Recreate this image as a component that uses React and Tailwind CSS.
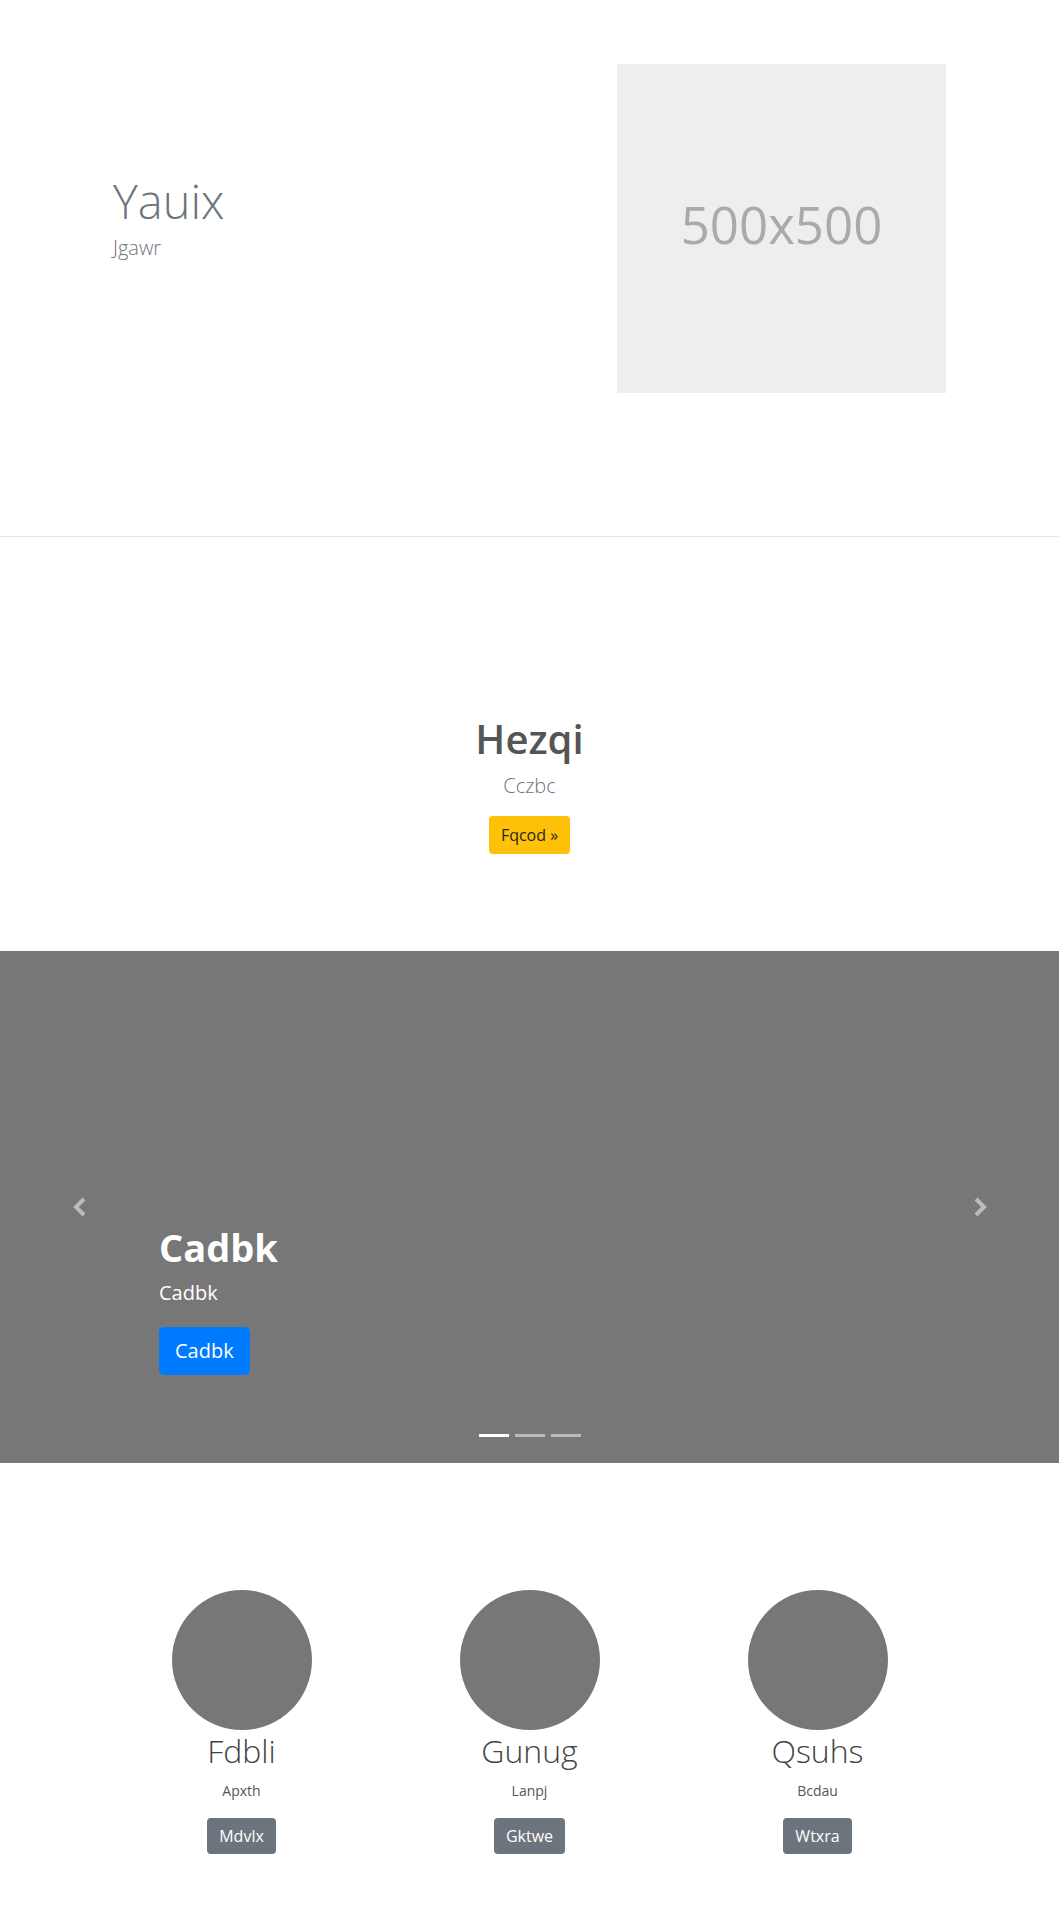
import React from 'react';

const team = [
  { name: 'Fdbli', role: 'Apxth', btn: 'Mdvlx' },
  { name: 'Gunug', role: 'Lanpj', btn: 'Gktwe' },
  { name: 'Qsuhs', role: 'Bcdau', btn: 'Wtxra' },
];

const Chevron = ({ dir }) => (
  <svg width="14" height="20" viewBox="0 0 14 20" fill="none">
    <polyline
      points={dir === 'left' ? '11,2 3,10 11,18' : '3,2 11,10 3,18'}
      stroke="#bbbbbb"
      strokeWidth="4"
      strokeLinejoin="miter"
    />
  </svg>
);

const App = () => {
  return (
    <div className="w-[1059px] bg-white font-['Open_Sans',sans-serif] text-[#212529]">
      {/* hero */}
      <section className="flex justify-between px-[113px] pb-[143px] border-b border-[#e6e6e6]">
        <div className="pt-[173px]">
          <h1 className="text-[47px] leading-[57px] font-light text-[#6c757d] mb-[3px]">Yauix</h1>
          <p className="text-[20px] leading-[30px] font-light text-[#6c757d]">Jgawr</p>
        </div>
        <div className="mt-[64px] w-[329px] h-[329px] bg-[#eeeeee] flex items-center justify-center">
          <span className="text-[51px] text-[#aaaaaa] font-normal leading-none -mt-[8px]">500x500</span>
        </div>
      </section>

      {/* call to action */}
      <section className="flex flex-col items-center pt-[178px] pb-[97px]">
        <h2 className="text-[40px] leading-[48px] font-semibold text-[#555555] mb-2">Hezqi</h2>
        <p className="text-[20px] leading-[30px] font-light text-[#6c757d] mb-[15px]">Cczbc</p>
        <button className="bg-[#ffc107] text-[#212529] text-[16px] leading-[24px] px-3 py-[7px] rounded-[4px]">Fqcod »</button>
      </section>

      {/* carousel */}
      <section className="relative h-[512px] bg-[#777777] flex flex-col justify-end pl-[159px] pb-[88px]">
        <div className="absolute left-0 top-0 h-full w-[159px] flex items-center justify-center">
          <Chevron dir="left" />
        </div>
        <div className="absolute right-0 top-0 h-full w-[159px] flex items-center justify-center">
          <Chevron dir="right" />
        </div>
        <h3 className="text-[38px] leading-[46px] font-bold text-white mb-2">Cadbk</h3>
        <p className="text-[20px] leading-[30px] text-white">Cadbk</p>
        <div className="mt-[19px]">
          <button className="bg-[#007bff] text-white text-[20px] leading-[30px] px-4 py-[9px] rounded-[5px]">Cadbk</button>
        </div>
        <div className="absolute bottom-[26px] left-0 right-0 flex justify-center gap-[6px]">
          <span className="w-[30px] h-[3px] bg-white" />
          <span className="w-[30px] h-[3px] bg-[#bbbbbb]" />
          <span className="w-[30px] h-[3px] bg-[#bbbbbb]" />
        </div>
      </section>

      {/* team */}
      <section className="pt-[127px] pb-[66px]">
        <div className="w-[864px] mx-auto grid grid-cols-3">
          {team.map(m => (
            <div key={m.name} className="flex flex-col items-center">
              <div className="w-[140px] h-[140px] rounded-full bg-[#777777]" />
              <h4 className="mt-[2px] text-[32px] leading-[38px] font-light text-[#444444]">{m.name}</h4>
              <p className="mt-[10px] text-[14px] leading-[21px] text-[#555555]">{m.role}</p>
              <button className="mt-[17px] bg-[#6c757d] text-white text-[16px] leading-[24px] px-3 py-[6px] rounded-[4px]">{m.btn}</button>
            </div>
          ))}
        </div>
      </section>
    </div>
  );
};

export default App;
